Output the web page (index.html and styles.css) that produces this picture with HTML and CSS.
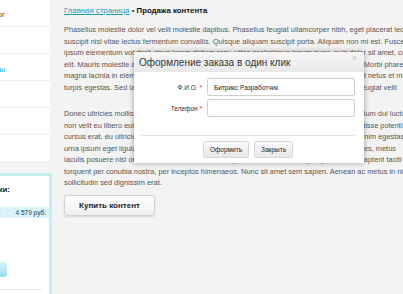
FILE: index.html
```html
<!DOCTYPE html>
<html lang="ru">
<head>
<meta charset="utf-8">
<link rel="stylesheet" href="styles.css">
</head>
<body>
<div class="page">
  <aside class="sidebar">
    <ul class="menu">
      <li class="dark">Каталог</li>
      <li class="hide">Новости</li>
      <li class="link">Контакты</li>
      <li class="hide">Вакансии</li>
      <li class="hide">Партнёрам</li>
      <li class="hide">О компании</li>
    </ul>
    <div class="cart">
      <div class="cart-title">Ваши покупки:</div>
      <div class="cart-sum"><span class="cart-label">Итого:</span><span class="cart-val">4 579 руб.</span></div>
      <div class="cart-btn"><span>Оформить заказ</span></div>
      <div class="cart-line"></div>
    </div>
  </aside>
  <main class="content">
    <div class="crumbs"><a href="#">Главная страница</a> <span class="sep">•</span> <b>Продажа контента</b></div>
    <p>Phasellus molestie dolor vel velit molestie dapibus. Phasellus feugiat ullamcorper nibh, eget placerat leo<br>suscipit nisl vitae lectus fermentum convallis. Quisque aliquam suscipit porta. Aliquam non mi est. Fusce<br>ipsum elementum volutpat, risus lorem dictum arcu, vitae scelerisque ipsum nunc, quis dolor sit amet, consectetur<br>elit. Mauris molestie ante eu lorem pellentesque ornare, fringilla purus ut in dictum sit amet. Morbi pharetra<br>magna lacinia in elementum tincidunt, tellus orci malesuada nisl, sed ac senectus tristique et netus et malesuada<br>turpis egestas. Sed lacinia sollicitudin ornare. Nunc interdum, dui vel pulvinar pretium, nisl feugiat velit</p>
    <p>Donec ultricies mollis lorem, suscipit porttitor turpis condimentum eget. Maecenas nunc pretium dui luctus<br>non velit eu libero euismod sed lacinia lectus ultricies ut. Curabitur vitae nunc odio. Suspendisse potenti<br>cursus erat, eu ultricies quam placerat at. Integer vitae dolor sit amet, molestie sed et nibh enim egestas<br>urna ipsum eget ligula, sit amet hendrerit dolor. Pellentesque varius nisl eget lorem ac sodales, metus<br>iaculis posuere nisl orci, in tincidunt sem. Pellentesque metus sodales tempor ipsum. Class aptent taciti sociosqu<br>torquent per conubia nostra, per inceptos himenaeos. Nunc sit amet sem sapien. Aenean ac metus in nisi<br>sollicitudin sed dignissim erat.</p>
    <button class="buy" type="button">Купить контент</button>
  </main>
</div>

<div class="modal">
  <div class="modal-head">
    <span class="modal-title">Оформление заказа в один клик</span>
    <span class="modal-close">×</span>
  </div>
  <div class="modal-body">
    <div class="row">
      <label>Ф.И.О. <i>*</i></label>
      <div class="field">Битрикс Разработчик</div>
    </div>
    <div class="row">
      <label>Телефон <i>*</i></label>
      <div class="field"></div>
    </div>
  </div>
  <div class="modal-foot">
    <button type="button" class="mbtn">Оформить</button>
    <button type="button" class="mbtn">Закрыть</button>
  </div>
</div>
</body>
</html>
```

FILE: styles.css
```css
* { box-sizing: border-box; }
html, body { margin: 0; padding: 0; }
body {
  width: 403px;
  height: 294px;
  overflow: hidden;
  background: #f3f3f3;
  font-family: "Liberation Sans", Arial, sans-serif;
  position: relative;
}
.page {
  display: flex;
  height: 294px;
}
.sidebar {
  width: 200px;
  margin-left: -148px;
  flex: none;
  display: flex;
  flex-direction: column;
}
.menu {
  list-style: none;
  margin: 0;
  padding: 0;
  background: #fff;
  width: 198px;
}
.menu li {
  height: 27px;
  border-bottom: 1px solid #ececec;
  font-size: 8px;
  color: #444;
  text-align: right;
  padding: 10px 45px 0 0;
  white-space: nowrap;
}
.menu li.hide { padding-right: 60px; }
.menu li:last-child { border-bottom: none; height: 26px; }
.menu li.link { color: #2aa7c0; padding-top: 11px; }
.cart {
  margin-top: 12px;
  flex: 1;
  background: #fff;
  border-right: 3px solid #c6eef5;
  border-top: 3px solid #c6eef5;
  position: relative;
  padding-top: 9px;
}
.cart-title {
  font-size: 8px;
  font-weight: bold;
  color: #222;
  text-align: right;
  padding-right: 39px;
  white-space: nowrap;
}
.cart-sum {
  margin-top: 13px;
  display: flex;
  justify-content: flex-end;
  width: 197px;
  padding-right: 0;
}
.cart-label, .cart-val {
  background: #d9f3f8;
  font-size: 6.5px;
  color: #234;
  padding: 2px 2px;
  white-space: nowrap;
}
.cart-label { padding-right: 12px; }
.cart-val { padding-left: 3px; padding-right: 3px; }
.cart-btn {
  margin-top: 44px;
  width: 155px;
  height: 15px;
  background: linear-gradient(#d8f4fa, #9edcea);
  border-radius: 3px;
  font-size: 7px;
  text-align: center;
  color: #fff;
}
.cart-line {
  margin-top: 12px;
  width: 190px;
  border-top: 1px solid #e6e6e6;
}
.content {
  flex: 1;
  padding: 6px 0 0 12px;
  min-width: 0;
  overflow: hidden;
}
.crumbs {
  font-size: 7.8px;
  color: #111;
  white-space: nowrap;
}
.crumbs a {
  color: #1f9db3;
  text-decoration: underline;
}
.crumbs .sep { color: #333; }
.content p {
  margin: 9px 0 0;
  white-space: nowrap;
  font-size: 7.4px;
  line-height: 11.5px;
  color: #555;
}
.content p + p { margin-top: 15px; }
.buy {
  margin-top: 6px;
  width: 91px;
  height: 21px;
  border: 1px solid #d2d2d2;
  border-radius: 3px;
  background: linear-gradient(#ffffff, #eeeeee);
  box-shadow: 0 1px 2px rgba(0,0,0,0.12);
  font-family: "Liberation Sans", Arial, sans-serif;
  font-size: 8px;
  font-weight: bold;
  color: #222;
  padding: 0;
}
.modal {
  position: absolute;
  left: 134px;
  top: 52px;
  width: 230px;
  height: 111px;
  background: #fff;
  box-shadow: 0 0 6px rgba(0,0,0,0.35);
}
.modal-head {
  height: 20px;
  background: linear-gradient(#f6f6f6, #e9e9e9);
  display: flex;
  align-items: center;
  justify-content: space-between;
  padding: 0 7px 0 5px;
}
.modal-title {
  font-size: 10px;
  color: #2c3a3a;
}
.modal-close {
  font-size: 9px;
  color: #c4c4c4;
  margin-top: -8px;
}
.modal-body {
  padding: 6px 9px 0 0;
}
.row {
  display: flex;
  align-items: center;
  margin-bottom: 3px;
}
.row label {
  width: 73px;
  text-align: right;
  font-size: 6.5px;
  color: #333;
  padding-right: 5px;
}
.row label i {
  font-style: normal;
  color: #e03030;
}
.field {
  width: 148px;
  height: 18px;
  border: 1px solid #cfcfcf;
  border-radius: 2px;
  font-size: 6.5px;
  color: #222;
  padding: 5px 6px 0;
}
.modal-foot {
  margin: 18px 9px 0 7px;
  border-top: 1px solid #e4e4e4;
  padding-top: 5px;
  display: flex;
  justify-content: center;
  gap: 5px;
}
.mbtn {
  height: 17px;
  padding: 0 6px;
  border: 1px solid #d8d8d8;
  border-radius: 2px;
  background: linear-gradient(#fafafa, #e8e8e8);
  font-family: "Liberation Sans", Arial, sans-serif;
  font-size: 6.5px;
  color: #222;
}
```
